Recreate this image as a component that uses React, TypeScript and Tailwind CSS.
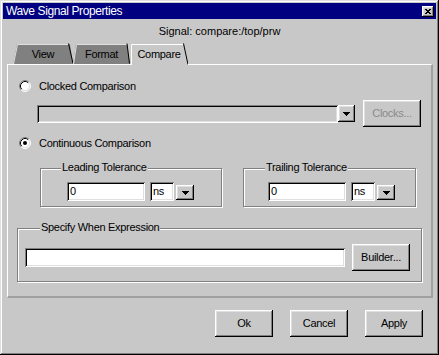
import React from 'react';

const raised =
  'bg-[#c8c8c8] shadow-[inset_-1px_-1px_0_#000,inset_1px_1px_0_#fff,inset_-2px_-2px_0_#808080,inset_2px_2px_0_#dfdfdf]';
const sunken =
  'shadow-[inset_1px_1px_0_#808080,inset_-1px_-1px_0_#fff,inset_2px_2px_0_#000,inset_-2px_-2px_0_#dfdfdf]';

const Radio: React.FC<{ checked?: boolean }> = ({ checked }) => (
  <svg width="12" height="12" viewBox="0 0 12 12" className="shrink-0">
    <circle cx="6" cy="6" r="5" fill="#fff" />
    <path d="M2.11 9.89A5.5 5.5 0 0 1 9.89 2.11" fill="none" stroke="#808080" />
    <path d="M9.89 2.11A5.5 5.5 0 0 1 2.11 9.89" fill="none" stroke="#fff" />
    <path d="M2.82 9.18A4.5 4.5 0 0 1 9.18 2.82" fill="none" stroke="#000" />
    <path d="M9.18 2.82A4.5 4.5 0 0 1 2.82 9.18" fill="none" stroke="#dfdfdf" />
    {checked && <circle cx="6" cy="6" r="2" fill="#000" />}
  </svg>
);

const DownArrow = () => (
  <svg width="7" height="4" viewBox="0 0 7 4" shapeRendering="crispEdges">
    <path d="M0 0h7v1H0zM1 1h5v1H1zM2 2h3v1H2zM3 3h1v1H3z" fill="#000" />
  </svg>
);

const DropButton: React.FC<{ className?: string }> = ({ className = '' }) => (
  <div className={`${raised} flex items-center justify-center ${className}`}>
    <DownArrow />
  </div>
);

const Button: React.FC<{ label: string; disabled?: boolean; className?: string }> = ({ label, disabled, className = '' }) => (
  <div
    className={`${raised} w-[58px] h-[27px] flex items-center justify-center shrink-0 ${disabled ? 'text-[#8a8a8a]' : 'text-black'} ${className}`}
  >
    {label}
  </div>
);

const Group: React.FC<{ label: string; labelClass: string; className: string; children: React.ReactNode }> = ({
  label,
  labelClass,
  className,
  children,
}) => (
  <div className={`relative border border-[#808080] shadow-[inset_1px_1px_0_#fff,1px_1px_0_#fff] ${className}`}>
    <span className={`absolute -top-[9px] bg-[#c8c8c8] px-[1px] leading-[14px] ${labelClass}`}>{label}</span>
    {children}
  </div>
);

const Tolerance: React.FC<{ label: string; labelClass: string; className: string; innerClass: string }> = ({
  label,
  labelClass,
  className,
  innerClass,
}) => (
  <Group label={label} labelClass={labelClass} className={`h-[39px] ${className}`}>
    <div className={`flex items-center pt-[13px] ${innerClass}`}>
      <div className={`${sunken} bg-white w-[78px] h-[19px] pl-[3px] leading-[19px]`}>0</div>
      <div className={`${sunken} bg-white w-[24px] h-[19px] ml-[5px] pl-[3px] leading-[19px]`}>ns</div>
      <DropButton className="w-[18px] h-[15px] ml-[2px] mt-[2px]" />
    </div>
  </Group>
);

const Tab: React.FC<{ label: string; width: string; children: React.ReactNode; active?: boolean }> = ({
  label,
  width,
  children,
  active,
}) => (
  <div className={`relative ${width} ${active ? 'h-[22px]' : 'h-[21px]'} flex justify-center pt-[4px]`}>
    {children}
    <span className="relative leading-[14px]">{label}</span>
  </div>
);

export default function App() {
  return (
    <div className="w-[439px] h-[355px] bg-white">
      <div className="w-[439px] h-[355px] bg-[#c8c8c8] p-[3px] flex flex-col font-['Liberation_Sans',Arial,sans-serif] text-[11px] tracking-[-0.3px] text-black shadow-[inset_-1px_-1px_0_#000,inset_1px_1px_0_#dfdfdf,inset_-2px_-2px_0_#808080,inset_2px_2px_0_#fff]">
        {/* title bar */}
        <div className="h-[16px] shrink-0 bg-[#000080] flex items-center pl-[3px] pr-[2px]">
          <span className="flex-1 text-white text-[12px] tracking-[-0.4px] leading-none">Wave Signal Properties</span>
          <div className={`${raised} w-[12px] h-[11px] flex items-center justify-center`}>
            <svg width="6" height="5" viewBox="0 0 6 5" shapeRendering="crispEdges">
              <path d="M0 0h2v1H0zM4 0h2v1H4zM1 1h4v1H1zM2 2h2v1H2zM1 3h4v1H1zM0 4h2v1H0zM4 4h2v1H4z" fill="#000" />
            </svg>
          </div>
        </div>

        {/* signal name */}
        <div className="h-[24px] shrink-0 flex items-center justify-center tracking-normal">Signal: compare:/top/prw</div>

        {/* tabs */}
        <div className="h-[21px] shrink-0 flex pl-[10px] relative z-10">
          <Tab label="View" width="w-[60px]">
            <svg className="absolute inset-0" width="60" height="21" viewBox="0 0 60 21">
              <polygon points="0,21 4,1 57,1 60,21" fill="#808080" />
              <path d="M0.5 21L4.5 1.5H56" fill="none" stroke="#dfdfdf" />
              <path d="M55.5 0.5L60 20.5" fill="none" stroke="#000" />
            </svg>
          </Tab>
          <Tab label="Format" width="w-[57px]">
            <svg className="absolute inset-0" width="57" height="21" viewBox="0 0 57 21">
              <polygon points="0,21 3,1 54,1 57,21" fill="#808080" />
              <path d="M0.5 21L3.5 1.5H54" fill="none" stroke="#dfdfdf" />
              <path d="M54 0.5L56.5 20.5" fill="none" stroke="#000" />
            </svg>
          </Tab>
          <Tab label="Compare" width="w-[58px]" active>
            <svg className="absolute inset-0" width="58" height="22" viewBox="0 0 58 22">
              <polygon points="1,22 1,1 53,1 58,22" fill="#c8c8c8" />
              <path d="M1.5 22V1.5H53" fill="none" stroke="#fff" />
              <path d="M53.5 0.5L58 21.5" fill="none" stroke="#000" />
            </svg>
          </Tab>
        </div>

        {/* panel */}
        <div className="ml-[4px] w-[426px] h-[234px] shrink-0 border-t border-l border-white border-r-2 border-b-2 border-r-[#a0a0a0] border-b-[#a0a0a0] flex flex-col">
          <div className="mt-[14px] h-[14px] pl-[11px] flex items-center gap-[8px]">
            <Radio />
            <span>Clocked Comparison</span>
          </div>

          <div className="mt-[7px] h-[27px] pl-[29px] flex items-center">
            <div className={`${sunken} w-[301px] h-[18px]`} />
            <DropButton className="w-[17px] h-[17px]" />
            <Button label="Clocks..." disabled className="ml-[8px] w-[57px]" />
          </div>

          <div className="mt-[9px] h-[14px] pl-[11px] flex items-center gap-[8px]">
            <Radio checked />
            <span>Continuous Comparison</span>
          </div>

          <div className="mt-[18px] pl-[32px] flex gap-[21px]">
            <Tolerance label="Leading Tolerance" labelClass="left-[20px]" className="w-[182px]" innerClass="pl-[26px]" />
            <Tolerance label="Trailing Tolerance" labelClass="left-[21px]" className="w-[173px]" innerClass="pl-[24px]" />
          </div>

          <div className="mt-[21px] pl-[9px]">
            <Group label="Specify When Expression" labelClass="left-[22px]" className="w-[405px] h-[54px]">
              <div className="flex items-center pt-[15px] pl-[7px] gap-[7px]">
                <div className={`${sunken} bg-white w-[320px] h-[19px]`} />
                <Button label="Builder..." className="w-[57px]" />
              </div>
            </Group>
          </div>
        </div>

        {/* dialog buttons */}
        <div className="mt-[12px] flex justify-end gap-[17px] pr-[13px]">
          <Button label="Ok" />
          <Button label="Cancel" />
          <Button label="Apply" />
        </div>
      </div>
    </div>
  );
}
